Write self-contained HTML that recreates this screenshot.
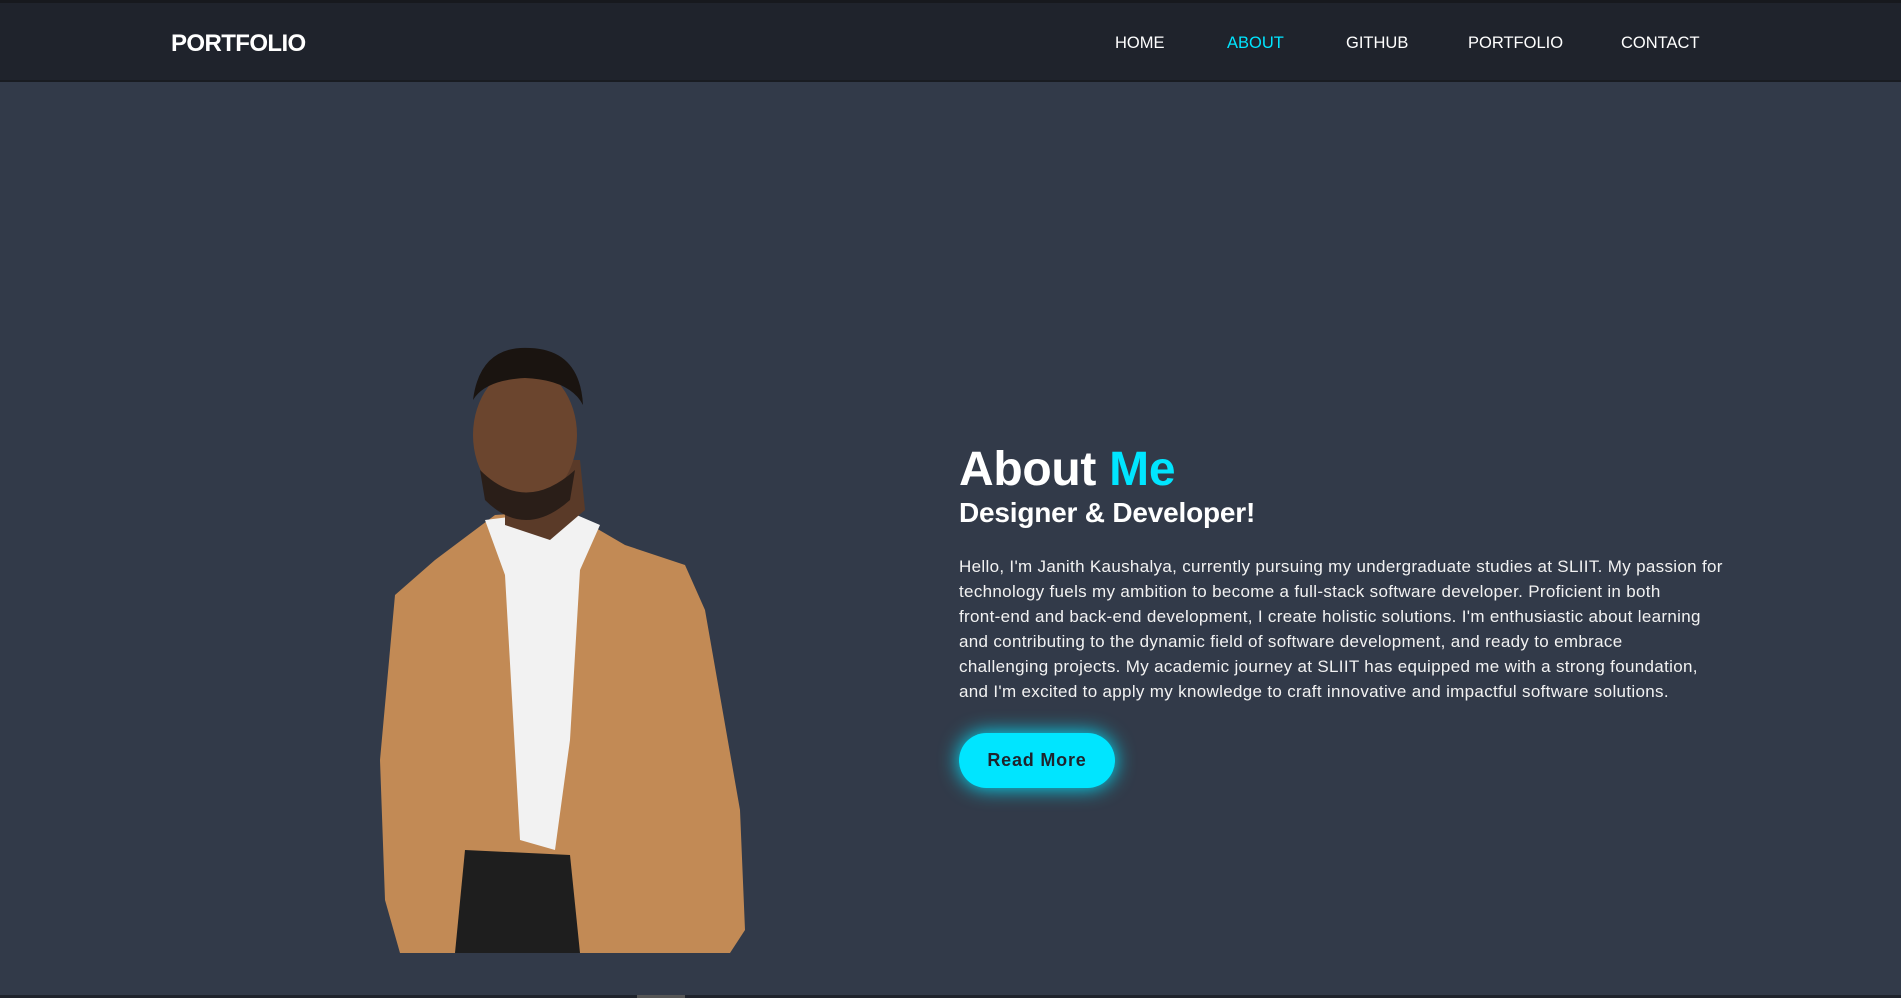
<!DOCTYPE html>
<html><head><meta charset="utf-8"><style>
*{margin:0;padding:0;box-sizing:border-box}
html,body{width:1901px;height:998px;overflow:hidden;background:#323a49;font-family:"Liberation Sans",sans-serif;color:#fff}
.top{position:absolute;left:0;top:0;width:1901px;height:3px;background:#17191e}
nav{position:absolute;left:0;top:3px;width:1901px;height:79px;background:#1f232c;border-bottom:2px solid #191c22}
.logo{position:absolute;left:171px;top:27px;font-size:24px;font-weight:bold;letter-spacing:-0.6px}
.links a{position:absolute;top:31px;font-size:16.5px;color:#fff;text-decoration:none}
.about{position:absolute;left:959px;top:442px}
h1{font-size:48px;font-weight:bold;line-height:56px;letter-spacing:-0.3px}
h1 span{color:#00e5ff}
h2{font-size:28px;font-weight:bold;margin-top:-3px;line-height:36px;letter-spacing:-0.2px}
p{margin-top:23px;font-size:17px;line-height:25px;color:#f2f2f2;white-space:nowrap;letter-spacing:0.32px}
.btn{position:absolute;left:959px;top:733px;width:156px;height:55px;border-radius:28px;background:#00e5ff;color:#1f232c;font-weight:bold;font-size:18px;text-align:center;line-height:55px;letter-spacing:0.8px;box-shadow:0 0 20px #00e5ff}
.bot{position:absolute;left:0;top:995px;width:1901px;height:3px;background:#1f232c}
.bot i{position:absolute;left:637px;width:48px;height:3px;background:#555}
</style></head><body>
<div class="top"></div>
<nav><div class="logo">PORTFOLIO</div>
<div class="links"><a style="left:1115px">HOME</a><a style="left:1227px;color:#00e5ff">ABOUT</a><a style="left:1346px">GITHUB</a><a style="left:1468px">PORTFOLIO</a><a style="left:1621px">CONTACT</a></div></nav>
<svg style="position:absolute;left:355px;top:340px" width="400" height="615" viewBox="0 0 400 615">
<path d="M45 613 L30 560 L25 420 L40 255 L80 220 L140 175 L210 170 L270 205 L330 225 L350 270 L385 470 L390 590 L375 613 Z" fill="#c28a55"/>
<path d="M130 180 L150 235 L165 500 L200 510 L215 400 L225 230 L245 185 L210 170 Z" fill="#f2f2f2"/>
<path d="M110 510 L215 515 L225 613 L100 613 Z" fill="#1e1e1e"/>
<path d="M150 120 L150 185 L195 200 L230 170 L225 120 Z" fill="#5a3a28"/>
<ellipse cx="170" cy="95" rx="52" ry="68" fill="#6b452e"/>
<path d="M118 60 Q125 5 175 8 Q225 10 228 65 Q215 40 170 38 Q130 40 118 60Z" fill="#1a1410"/>
<path d="M125 130 Q170 175 220 130 L215 160 Q170 200 130 160Z" fill="#2a1e18"/>
</svg>
<div class="about"><h1>About <span>Me</span></h1><h2>Designer &amp; Developer!</h2>
<p>Hello, I'm Janith Kaushalya, currently pursuing my undergraduate studies at SLIIT. My passion for<br>technology fuels my ambition to become a full-stack software developer. Proficient in both<br>front-end and back-end development, I create holistic solutions. I'm enthusiastic about learning<br>and contributing to the dynamic field of software development, and ready to embrace<br>challenging projects. My academic journey at SLIIT has equipped me with a strong foundation,<br>and I'm excited to apply my knowledge to craft innovative and impactful software solutions.</p></div>
<div class="btn">Read More</div>
<div class="bot"><i></i></div>
</body></html>
